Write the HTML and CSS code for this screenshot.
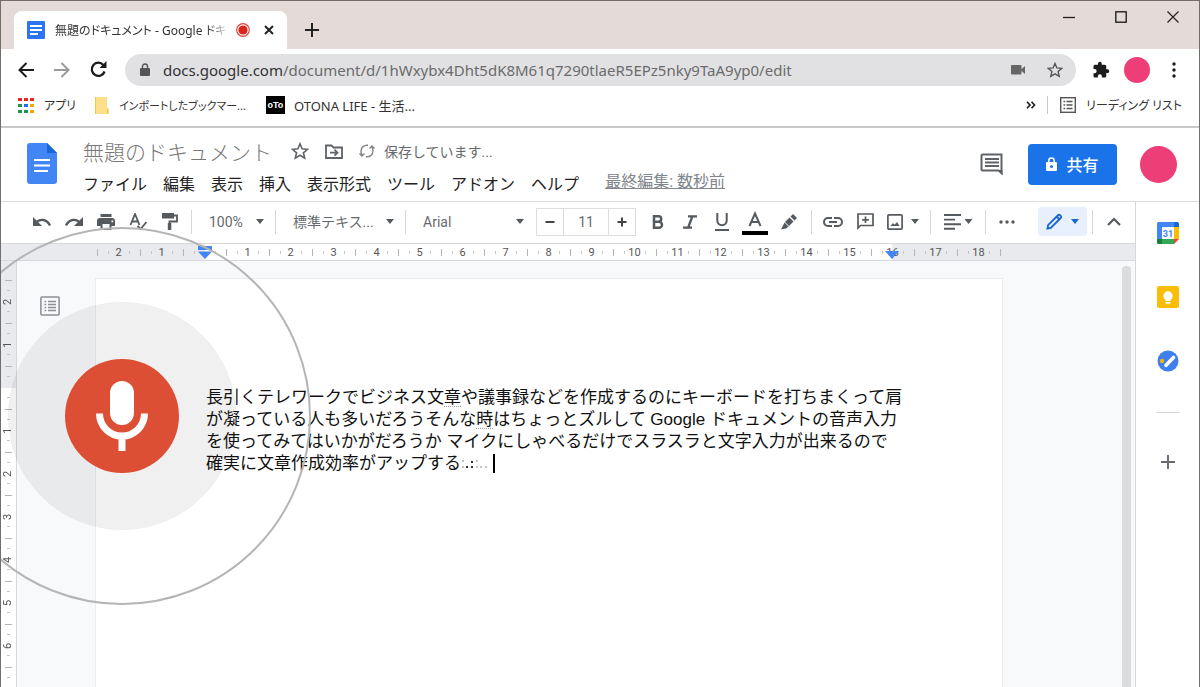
FILE: index.html
```html
<!DOCTYPE html>
<html lang="ja">
<head>
<meta charset="utf-8">
<title>無題のドキュメント - Google ドキュメント</title>
<link rel="stylesheet" href="styles.css">
</head>
<body>
<div class="window">
  <div class="tabstrip">
    <div class="tab">
      <svg class="favicon" width="18" height="18" viewBox="0 0 18 18"><rect width="18" height="18" rx="1" fill="#2e74f0"/><path d="M3 5h12M3 9h12M3 13h8" stroke="#fff" stroke-width="2"/></svg>
      <span class="tab-title">無題のドキュメント - Google ドキ</span>
      <svg width="14" height="14" viewBox="0 0 14 14"><circle cx="7" cy="7" r="6.3" fill="none" stroke="#e0443c" stroke-width="1.2"/><circle cx="7" cy="7" r="4.6" fill="#d9251c"/></svg>
      <button class="plain tab-close" aria-label="タブを閉じる"><svg width="10" height="10" viewBox="0 0 10 10"><path d="M1 1l8 8M9 1L1 9" stroke="#222" stroke-width="2"/></svg></button>
    </div>
    <button class="plain new-tab" aria-label="新しいタブ"><svg width="14" height="14" viewBox="0 0 14 14"><path d="M7 0v14M0 7h14" stroke="#222" stroke-width="2"/></svg></button>
    <div class="window-controls">
      <button class="plain" aria-label="最小化"><svg width="12" height="12" viewBox="0 0 12 12"><path d="M0 6.5h12" stroke="#222" stroke-width="1.3"/></svg></button>
      <button class="plain" aria-label="最大化"><svg width="12" height="12" viewBox="0 0 12 12"><rect x=".8" y=".8" width="10.4" height="10.4" fill="none" stroke="#222" stroke-width="1.4"/></svg></button>
      <button class="plain" aria-label="閉じる"><svg width="12" height="12" viewBox="0 0 12 12"><path d="M.5.5l11 11M11.5.5l-11 11" stroke="#222" stroke-width="1.2"/></svg></button>
    </div>
  </div>

  <div class="navbar">
    <button class="plain nav-btn" aria-label="戻る"><svg width="16" height="16" viewBox="0 0 16 16" fill="none" stroke="#1c1c1c" stroke-width="2"><path d="M16 8H2M8.500 1L1.500 8l7 7"/></svg></button>
    <button class="plain nav-btn" aria-label="進む"><svg width="16" height="16" viewBox="0 0 16 16" fill="none" stroke="#9a9a9a" stroke-width="2"><path d="M0 8h14M7.500 1l7 7-7 7"/></svg></button>
    <button class="plain nav-btn" aria-label="再読み込み"><svg width="17" height="17" viewBox="0 0 17 17"><path d="M14.600 10.500A6.600 6.600 0 1 1 13.300 3.900" fill="none" stroke="#1c1c1c" stroke-width="2.300"/><path d="M16.500 0v7h-7z" fill="#1c1c1c"/></svg></button>
    <div class="omnibox">
      <svg width="10" height="13" viewBox="0 0 10 13"><path d="M2.500 6V3.500a2.500 2.500 0 0 1 5 0V6" fill="none" stroke="#555" stroke-width="1.400"/><rect y="5" width="10" height="8" rx="1" fill="#555"/></svg>
      <label class="host" for="url">docs.google.com</label>
      <input id="url" class="url" type="text" value="/document/d/1hWxybx4Dht5dK8M61q7290tlaeR5EPz5nky9TaA9yp0/edit">
      <button class="plain" aria-label="カメラ"><svg width="14" height="10" viewBox="0 0 14 10" fill="#666"><rect width="10.500" height="9.500" rx="1"/><path d="M10 4.500L14 1v8l-4-3.500z"/></svg></button>
      <button class="plain omni-star" aria-label="ブックマーク"><svg width="16" height="16" viewBox="0 0 16 16"><path d="M8 1.400l1.900 4.500 4.900.4-3.700 3.200 1.100 4.800L8 11.800l-4.200 2.500 1.100-4.800L1.200 6.300l4.900-.4z" fill="none" stroke="#555" stroke-width="1.400"/></svg></button>
    </div>
    <button class="plain extensions" aria-label="拡張機能"><svg width="18" height="18" viewBox="0 0 24 24" fill="#1c1c1c"><path d="M20.500 11H19V7a2 2 0 0 0-2-2h-4V3.500a2.500 2.500 0 0 0-5 0V5H4a2 2 0 0 0-2 2v3.800h1.500a2.700 2.700 0 0 1 0 5.400H2V20a2 2 0 0 0 2 2h3.800v-1.500a2.700 2.700 0 0 1 5.400 0V22H17a2 2 0 0 0 2-2v-4h1.500a2.500 2.500 0 0 0 0-5z"/></svg></button>
    <button class="plain avatar avatar-small" aria-label="プロフィール"></button>
    <button class="plain browser-menu" aria-label="設定"><svg width="4" height="16" viewBox="0 0 4 16" fill="#1c1c1c"><circle cx="2" cy="2" r="1.700"/><circle cx="2" cy="8" r="1.700"/><circle cx="2" cy="14" r="1.700"/></svg></button>
  </div>

  <div class="bookmarks">
    <a class="bookmark" href="#"><svg width="16" height="15" viewBox="0 0 16 15"><g fill="#e8261c"><path d="M0 0h4v3H0zM6 0h4v3H6zM12 0h4v3h-4z"/></g><path d="M0 6h4v3H0zM0 12h4v3H0zM6 12h4v3H6z" fill="#1e9448"/><path d="M6 6h4v3H6z" fill="#1a73e8"/><path d="M12 6h4v3h-4zM12 12h4v3h-4z" fill="#f3a600"/></svg>アプリ</a>
    <a class="bookmark folder" href="#"><svg width="15" height="17" viewBox="0 0 15 17"><path d="M1 0h12v10l1.500 2V17H1z" fill="#ffe08a"/><path d="M13 11v6h1.500v-5zM1 0h1v17H1z" fill="#eec75a"/></svg>インポートしたブックマー...</a>
    <a class="bookmark oto" href="#"><span class="oto-logo">oTo</span>OTONA LIFE - 生活...</a>
    <button class="plain overflow" aria-label="その他のブックマーク"><svg width="10" height="8" viewBox="0 0 10 8" fill="none" stroke="#222" stroke-width="1.700"><path d="M1 .7L4 4 1 7.300M5.500.7l3 3.300-3 3.300"/></svg></button>
    <button class="plain bookmark reading"><svg width="16" height="16" viewBox="0 0 16 16"><rect x=".7" y=".7" width="14.600" height="14.600" fill="none" stroke="#555" stroke-width="1.400"/><path d="M3.500 4.500h1.700M3.500 8h1.700M3.500 11.500h1.700M6.500 4.500h6M6.500 8h6M6.500 11.500h6" stroke="#555" stroke-width="1.400"/></svg>リーディング リスト</button>
  </div>

  <header class="doc-header">
    <svg class="docs-logo" width="30" height="41" viewBox="0 0 30 41"><path d="M3 0h17l10 10v28a3 3 0 0 1-3 3H3a3 3 0 0 1-3-3V3a3 3 0 0 1 3-3z" fill="#4285f4"/><path d="M20 0l10 10H20z" fill="#1967d2"/><path d="M7 17h16M7 22.500h16M7 28h14" stroke="#fff" stroke-width="2.200"/></svg>
    <div class="doc-meta">
      <div class="title-row">
        <input class="doc-title" type="text" aria-label="ドキュメント名" value="無題のドキュメント">
        <button class="plain" aria-label="スター"><svg width="18" height="18" viewBox="0 0 18 18"><path d="M9 1.800l2.100 5 5.400.5-4.100 3.500 1.300 5.300L9 13.300l-4.700 2.800 1.300-5.300L1.500 7.300l5.400-.5z" fill="none" stroke="#5f6368" stroke-width="1.600"/></svg></button>
        <button class="plain" aria-label="移動"><svg width="18" height="15" viewBox="0 0 18 15" fill="none" stroke="#5f6368" stroke-width="1.800"><path d="M1 13V1.500h5.500l2 2H17V14H1zM5 8.700h7M9.500 5.700l3 3-3 3"/></svg></button>
        <span class="saving"><svg width="16" height="14" viewBox="0 0 16 14" fill="none" stroke="#80868b" stroke-width="1.400"><path d="M9 1.300C5 .8 2 3.500 2 7c0 1.500.3 2.700 1 3.800M.5 9.500L3 12l2.500-2.500M7 12.700c4 .5 7-2.200 7-5.700 0-1.500-.3-2.700-1-3.800M15.500 4.500L13 2l-2.500 2.500"/></svg>保存しています...</span>
      </div>
      <nav class="menu-row">
        <button class="plain">ファイル</button><button class="plain">編集</button><button class="plain">表示</button><button class="plain">挿入</button><button class="plain">表示形式</button><button class="plain">ツール</button><button class="plain">アドオン</button><button class="plain">ヘルプ</button>
        <a class="last-edit" href="#">最終編集: 数秒前</a>
      </nav>
    </div>
    <div class="header-actions">
      <button class="plain" aria-label="コメント履歴"><svg width="24" height="23" viewBox="0 0 24 23"><path d="M2.500 1.500h19V20l-3-2.500h-16a1 1 0 0 1-1-1v-14a1 1 0 0 1 1-1z" fill="none" stroke="#5f6368" stroke-width="2"/><path d="M18 17h4.500v5.500z" fill="#5f6368"/><path d="M5 6h14M5 9.500h14M5 13h14" stroke="#5f6368" stroke-width="1.800"/></svg></button>
      <button class="share"><svg width="11" height="14" viewBox="0 0 11 14"><path d="M2.800 6V3.700a2.700 2.700 0 0 1 5.400 0V6" fill="none" stroke="#fff" stroke-width="1.500"/><path fill-rule="evenodd" d="M1 5h9a1 1 0 0 1 1 1v7a1 1 0 0 1-1 1H1a1 1 0 0 1-1-1V6a1 1 0 0 1 1-1zm4.500 3a1.500 1.500 0 1 0 0 3 1.500 1.500 0 0 0 0-3z" fill="#fff"/></svg>共有</button>
      <button class="plain avatar avatar-large" aria-label="アカウント"></button>
    </div>
  </header>

  <div class="workspace">
    <div class="editor">
      <div class="toolbar">
        <button class="plain tool" aria-label="元に戻す"><svg width="20" height="12" viewBox="0 0 20 12"><path d="M3 7.500C8 2 15 3 18 9.500" fill="none" stroke="#555a5f" stroke-width="2.300"/><path d="M1 1v9h9z" fill="#555a5f"/></svg></button>
        <button class="plain tool" aria-label="やり直し"><svg width="20" height="12" viewBox="0 0 20 12"><path d="M17 7.500C12 2 5 3 2 9.500" fill="none" stroke="#555a5f" stroke-width="2.300"/><path d="M19 1v9h-9z" fill="#555a5f"/></svg></button>
        <button class="plain tool" aria-label="印刷"><svg width="18" height="16" viewBox="0 0 18 16"><path fill-rule="evenodd" d="M3.500 0h11v3h-11zM3 4h12a3 3 0 0 1 3 3v5h-3.500v4h-11v-4H0V7a3 3 0 0 1 3-3zm2.500 6v4h7v-4zm9-3.500v1.700h1.700V6.500z" fill="#555a5f"/></svg></button>
        <button class="plain tool" aria-label="スペルチェック"><svg width="18" height="17" viewBox="0 0 18 17" fill="none" stroke="#555a5f" stroke-width="1.800"><path d="M1.500 12L6 1l4.500 11M3 8.500h6M8.500 13l3 3L17.500 9"/></svg></button>
        <button class="plain tool" aria-label="書式を貼り付け"><svg width="16" height="17" viewBox="0 0 16 17"><path d="M0 0h12v5.500H0z" fill="#555a5f"/><path d="M12 2.500h3v6H7.500V11" fill="none" stroke="#555a5f" stroke-width="1.800"/><path d="M5.800 10h3.500v7H5.800z" fill="#555a5f"/></svg></button>
        <span class="sep"></span>
        <span class="picker picker-zoom"><select aria-label="ズーム"><option>100%</option></select></span>
        <span class="sep"></span>
        <span class="picker picker-style"><select aria-label="スタイル"><option>標準テキス...</option></select></span>
        <span class="sep"></span>
        <span class="picker picker-font"><select aria-label="フォント"><option>Arial</option></select></span>
        <div class="font-size">
          <button class="plain" aria-label="縮小"><svg width="12" height="12" viewBox="0 0 12 12"><path d="M1.500 6h9" stroke="#444" stroke-width="2"/></svg></button>
          <input type="text" aria-label="フォントサイズ" value="11">
          <button class="plain" aria-label="拡大"><svg width="12" height="12" viewBox="0 0 12 12"><path d="M1.500 6h9M6 1.500v9" stroke="#444" stroke-width="2"/></svg></button>
        </div>
        <button class="plain tool" aria-label="太字"><svg width="12" height="14" viewBox="0 0 12 14"><path d="M2 1.300h4.500a2.700 2.700 0 0 1 0 5.400H2zM2 6.700h5a3 3 0 0 1 0 6H2z" fill="none" stroke="#555a5f" stroke-width="2.500"/></svg></button>
        <button class="plain tool" aria-label="斜体"><svg width="14" height="14" viewBox="0 0 14 14"><path d="M5 1.300h9M0 12.700h9M9.500 1L5 13" fill="none" stroke="#555a5f" stroke-width="2.300"/></svg></button>
        <button class="plain tool" aria-label="下線"><svg width="14" height="18" viewBox="0 0 14 18"><path d="M2.300 0v7.500a4.700 4.700 0 0 0 9.400 0V0M0 17h14" fill="none" stroke="#555a5f" stroke-width="2"/></svg></button>
        <button class="plain tool tool-mid" aria-label="テキストの色"><svg width="26" height="26" viewBox="0 0 26 26"><path d="M7.500 17L13 4.500 18.500 17M9.500 13h7" fill="none" stroke="#555a5f" stroke-width="2"/><path d="M0 22h26v4H0z"/></svg></button>
        <button class="plain tool tool-mid" aria-label="ハイライト"><svg width="16" height="16" viewBox="0 0 16 16" fill="#555a5f"><path d="M9.500 2.500L12 0l4 4-2.500 2.500zM8.500 3.500l4 4L8 12 4 8zM3.500 8.500l4 4L5 14.500 0 15.500z"/></svg></button>
        <span class="sep"></span>
        <button class="plain tool" aria-label="リンク"><svg width="20" height="10" viewBox="0 0 20 10" fill="none" stroke="#555a5f" stroke-width="2"><path d="M9 1H5a4 4 0 0 0 0 8h4M11 1h4a4 4 0 0 1 0 8h-4M6 5h8"/></svg></button>
        <button class="plain tool" aria-label="コメントを追加"><svg width="17" height="17" viewBox="0 0 17 17" fill="none" stroke="#555a5f" stroke-width="1.700"><path d="M1 15V1h15v11.500H3.500zM8.500 3.500v6.500M5.200 6.800h6.600"/></svg></button>
        <button class="plain tool tool-drop" aria-label="画像を挿入"><svg width="16" height="16" viewBox="0 0 16 16"><rect x=".9" y=".9" width="14.200" height="14.200" rx="1" fill="none" stroke="#555a5f" stroke-width="1.700"/><path d="M3.500 12l2.500-3 1.500 1.800L10 8l2.500 4z" fill="#555a5f"/></svg><span class="caret"></span></button>
        <span class="sep"></span>
        <button class="plain tool tool-drop align" aria-label="配置"><svg width="17" height="16" viewBox="0 0 17 16"><path d="M0 1h17M0 5.600h11M0 10.200h17M0 14.800h11" stroke="#555a5f" stroke-width="1.900"/></svg><span class="caret"></span></button>
        <span class="sep"></span>
        <button class="plain tool" aria-label="その他"><svg width="16" height="4" viewBox="0 0 16 4" fill="#555a5f"><circle cx="2" cy="2" r="1.700"/><circle cx="8" cy="2" r="1.700"/><circle cx="14" cy="2" r="1.700"/></svg></button>
        <button class="plain mode" aria-label="編集モード"><svg width="17" height="17" viewBox="0 0 17 17"><path d="M1.500 15.500l.6-3.300L12 2.300a1.500 1.500 0 0 1 2 0l.7.7a1.500 1.500 0 0 1 0 2L4.800 14.900z" fill="none" stroke="#1967d2" stroke-width="1.900"/><path d="M10.500 3.500l3 3" stroke="#1967d2" stroke-width="2"/></svg><span class="caret caret-blue"></span></button>
        <span class="sep"></span>
        <button class="plain tool" aria-label="メニューを隠す"><svg width="14" height="9" viewBox="0 0 14 9"><path d="M1 8l6-6 6 6" fill="none" stroke="#555a5f" stroke-width="2.200"/></svg></button>
      </div>

      <div class="ruler">
        <span>2</span><span>1</span><span></span><span>1</span><span>2</span><span>3</span><span>4</span><span>5</span><span>6</span><span>7</span><span>8</span><span>9</span><span>10</span><span>11</span><span>12</span><span>13</span><span>14</span><span>15</span><span>16</span><span>17</span><span>18</span><span class="ruler-end"></span>
        <svg class="indent indent-left" width="14" height="13" viewBox="0 0 14 13" fill="#4285f4"><path d="M0 0h14v4H0zM0 5.500h14L7 13z"/></svg>
        <svg class="indent indent-right" width="14" height="13" viewBox="0 0 14 13" fill="#4285f4"><path d="M0 5h14l-7 8z"/></svg>
      </div>

      <div class="canvas">
        <div class="vruler">
          <span>2</span><span>1</span><span></span><span>1</span><span>2</span><span>3</span><span>4</span><span>5</span><span>6</span><span></span>
        </div>
        <div class="outline">
          <button class="plain" aria-label="ドキュメントの概要"><svg width="20" height="20" viewBox="0 0 20 20" stroke="#8b8f94" stroke-width="1.500"><rect x=".9" y=".9" width="18.200" height="18.200" rx="1" fill="none"/><path d="M4.500 5.500h1.700M4.500 8.500h1.700M4.500 11.500h1.700M4.500 14.500h1.700M8 5.500h8M8 8.500h8M8 11.500h8M8 14.500h8"/></svg></button>
        </div>
        <main class="page">
          <p class="text" contenteditable="true" spellcheck="false">長引くテレワークでビジネス文<span class="hint">章</span>や議事録などを作成するのにキーボードを打ちまくって肩<br>が凝っている人も多いだろうそんな<span class="hint">時</span>はちょっとズルして Google ドキュメントの音声入力<br>を使ってみてはいかがだろうか マイクにしゃべるだけでスラスラと文字入力が出来るので<br>確実に文章作成効率がアップする<svg class="dictating" width="28" height="10" viewBox="0 0 28 10"><g fill="#c4c4c4"><path d="M1 1h2v2H1zM1 7h2v2H1zM15 1h2v2h-2zM15 7h2v2h-2zM19 7h2v2h-2zM24 7h2v2h-2z"/></g><path d="M5 7h2v2H5zM10 2h2v2h-2zM10 7h2v2h-2z" fill="#333"/></svg><span class="cursor"></span></p>
        </main>
        <div class="scroll-track"><div class="scroll-thumb"></div></div>
      </div>
    </div>

    <aside class="side">
      <button class="plain" aria-label="カレンダー"><svg width="22" height="22" viewBox="0 0 22 22"><path d="M1.500 0H17v5H5v12H0V1.500A1.500 1.500 0 0 1 1.500 0z" fill="#4285f4"/><path d="M17 0h3.500A1.500 1.500 0 0 1 22 1.500V5h-5z" fill="#1967d2"/><path d="M17 5h5v12h-5z" fill="#fbbc04"/><path d="M5 17h12v5H5z" fill="#34a853"/><path d="M0 17h5v5H1.500A1.500 1.500 0 0 1 0 20.500z" fill="#188038"/><path d="M17 17h5l-5 5z" fill="#ea4335"/><path d="M5 5h12v12H5z" fill="#fff"/><text class="cal-day" x="11" y="14.500" text-anchor="middle">31</text></svg></button>
      <button class="plain" aria-label="Keep"><svg width="22" height="22" viewBox="0 0 22 22"><rect width="22" height="22" rx="2" fill="#fbbc04"/><circle cx="11" cy="10" r="4.700" fill="#fff"/><path d="M8.500 13h5v2h-5zM8.700 16h4.600v1.700H8.700z" fill="#fff"/></svg></button>
      <button class="plain" aria-label="ToDo リスト"><svg width="22" height="22" viewBox="0 0 22 22"><circle cx="11" cy="11" r="10.500" fill="#3f80ee"/><path d="M9 15.300L16.500 7.500" stroke="#fff" stroke-width="3.600" stroke-linecap="round"/><circle cx="5" cy="11" r="2.200" fill="#f5b400"/></svg></button>
      <hr>
      <button class="plain" aria-label="アドオンを取得"><svg width="14" height="14" viewBox="0 0 14 14"><path d="M7 0v14M0 7h14" stroke="#666a6e" stroke-width="1.900"/></svg></button>
    </aside>
  </div>

  <div class="voice">
    <div class="voice-level">
      <button class="plain voice-button" aria-label="音声入力を停止"><svg width="52" height="70" viewBox="0 0 52 70"><rect x="14" y="0" width="24" height="44" rx="12" fill="#fff"/><path d="M3.500 32.500a22.500 22.500 0 0 0 45 0M26 55v15" fill="none" stroke="#fff" stroke-width="7"/></svg></button>
    </div>
  </div>
</div>
</body>
</html>
```
FILE: styles.css
```css
* {
  box-sizing: border-box;
}

body {
  margin: 0;
  background: #fff;
  color: #333;
  font-family: "Noto Sans", "Noto Sans CJK JP", sans-serif;
  font-size: 13px;
}

svg {
  display: block;
  flex: none;
}

.plain {
  display: flex;
  align-items: center;
  justify-content: center;
  flex: none;
  margin: 0;
  padding: 0;
  border: 0;
  background: none;
  color: inherit;
  font: inherit;
  cursor: pointer;
}

input,
select {
  min-width: 0;
  margin: 0;
  padding: 0;
  border: 0;
  outline: 0;
  background: none;
  color: inherit;
  font: inherit;
}

.window {
  position: relative;
  display: flex;
  flex-direction: column;
  height: 100vh;
  overflow: hidden;
  border: 1px solid #756c6c;
  border-bottom: 0;
}

/* Browser chrome */

.tabstrip {
  display: flex;
  align-items: flex-end;
  flex: none;
  height: 48px;
  padding-left: 13px;
  background: #e4dad7;
}

.tab {
  display: flex;
  align-items: center;
  width: 273px;
  height: 38px;
  padding: 0 13px;
  border-radius: 8px 8px 0 0;
  background: #fff;
}

.tab-title {
  flex: 1;
  margin-left: 10px;
  font-size: 12px;
  font-feature-settings: "palt";
  white-space: nowrap;
  mask-image: linear-gradient(to right, #000 84%, transparent 97%);
}

.tab-close {
  margin-left: 14px;
}

.new-tab {
  height: 38px;
  margin-left: 18px;
}

.window-controls {
  display: flex;
  align-self: flex-start;
  gap: 40px;
  margin-left: auto;
  padding: 10px 20px 0 0;
}

.navbar {
  display: flex;
  align-items: center;
  flex: none;
  height: 41px;
  padding: 0 23px 0 7px;
}

.nav-btn {
  width: 36px;
}

.omnibox {
  display: flex;
  align-items: center;
  flex: 1;
  height: 32px;
  margin-left: 9px;
  padding: 0 13px 0 15px;
  border-radius: 16px;
  background: #e1e1e3;
  font-size: 15px;
}

.host {
  margin-left: 13px;
  color: #333;
}

.url {
  flex: 1;
  color: #6b6b6b;
}

.omni-star {
  margin-left: 22px;
}

.extensions {
  margin-left: 16px;
}

.avatar {
  border-radius: 50%;
  background: #ee3e78;
}

.avatar-small {
  width: 26px;
  height: 26px;
  margin: 0 22px 0 14px;
}

.bookmarks {
  display: flex;
  align-items: center;
  flex: none;
  height: 38px;
  padding: 0 17px 6px;
  border-bottom: 2px solid #c9c9c9;
  font-size: 12px;
  font-feature-settings: "palt";
}

.bookmark {
  display: flex;
  align-items: center;
  gap: 10px;
  color: #333;
  text-decoration: none;
  white-space: nowrap;
}

.folder {
  margin-left: 18px;
  font-size: 11px;
}

.oto {
  gap: 9px;
  margin-left: 20px;
  font-size: 13px;
}

.oto-logo {
  width: 19px;
  height: 18px;
  background: #000;
  color: #fff;
  font: bold 9px/18px "Liberation Sans", sans-serif;
  text-align: center;
}

.overflow {
  margin-left: auto;
}

.reading {
  margin-left: 11px;
  padding: 0 0 0 12px;
  border-left: 1px solid #c8c8c8;
}

/* Document header */

.doc-header {
  display: flex;
  flex: none;
  height: 74px;
  padding: 0 22px 0 26px;
  border-bottom: 1px solid #dcdde0;
}

.docs-logo {
  margin: 15px 26px 0 0;
}

.doc-meta {
  flex: 1;
  padding-top: 7px;
  font-family: Roboto, "Noto Sans CJK JP", sans-serif;
}

.title-row,
.menu-row {
  display: flex;
  align-items: center;
  height: 32px;
  white-space: nowrap;
}

.title-row {
  gap: 16px;
}

.doc-title {
  width: 192px;
  color: #777;
  font-size: 21px;
  font-weight: 300;
}

.saving {
  display: flex;
  align-items: center;
  gap: 9px;
  color: #666a6e;
  font-size: 14px;
}

.menu-row {
  gap: 16px;
  color: #222;
  font-size: 16px;
}

.last-edit {
  margin: 0 0 6px 10px;
  color: #80868b;
}

.header-actions {
  display: flex;
  align-items: center;
}

.share {
  display: flex;
  align-items: center;
  justify-content: center;
  gap: 9px;
  width: 89px;
  height: 41px;
  margin: 0 23px 0 24px;
  padding: 0 0 2px;
  border: 0;
  border-radius: 4px;
  background: #1a73e8;
  color: #fff;
  font: 500 16px "Noto Sans CJK JP", sans-serif;
}

.avatar-large {
  width: 37px;
  height: 37px;
}

/* Editor */

.workspace {
  display: flex;
  flex: 1;
  min-height: 0;
}

.editor {
  display: flex;
  flex: 1;
  flex-direction: column;
  min-width: 0;
}

.toolbar {
  display: flex;
  align-items: center;
  flex: none;
  height: 42px;
  padding: 0 5px 2px 25px;
  border-bottom: 1px solid #d6d8db;
  color: #666a6e;
  font-family: Roboto, "Noto Sans CJK JP", sans-serif;
  font-size: 14px;
}

.tool {
  width: 32px;
  height: 30px;
}

.tool-mid {
  width: 34px;
}

.tool-drop {
  width: 44px;
  gap: 8px;
}

.align {
  gap: 4px;
}

.sep {
  width: 1px;
  height: 24px;
  margin: 0 5px;
  background: #d6d8db;
}

.caret,
.picker::after {
  width: 8px;
  height: 5px;
  background: #555a5f;
  clip-path: polygon(0 0, 100% 0, 50% 100%);
  content: "";
}

.caret-blue {
  background: #1967d2;
}

.picker {
  display: flex;
  align-items: center;
  padding: 0 6px 0 12px;
}

.picker select {
  flex: 1;
  appearance: none;
}

.picker-zoom {
  width: 73px;
}

.picker-style {
  width: 119px;
}

.picker-font {
  width: 119px;
}

.font-size {
  display: flex;
  height: 28px;
  margin: 0 6px;
  border: 1px solid #dcdde0;
}

.font-size button {
  width: 26px;
}

.font-size input {
  width: 46px;
  border: solid #dcdde0;
  border-width: 0 1px;
  text-align: center;
}

.mode {
  gap: 8px;
  width: 49px;
  height: 29px;
  margin-left: auto;
  border-radius: 3px;
  background: #e8f0fe;
}

.ruler {
  position: relative;
  display: flex;
  flex: none;
  height: 17px;
  padding-left: 96px;
  border-bottom: 1px solid #d6d8db;
  background: linear-gradient(to right, #e8eaed 204px, #fff 204px, #fff 891px, #e8eaed 891px);
}

.ruler,
.vruler {
  color: #555;
  font: 11px/18px Roboto, sans-serif;
  text-align: center;
}

.ruler span {
  flex: 0 0 43px;
  height: 16px;
  background:
    linear-gradient(#b4b4b4, #b4b4b4) 0 50% / 1px 7px,
    linear-gradient(#c6c6c6, #c6c6c6) 11px 50% / 1px 3px,
    linear-gradient(#c6c6c6, #c6c6c6) 32px 50% / 1px 3px;
  background-repeat: no-repeat;
}

.ruler .ruler-end {
  flex-basis: 1px;
}

.indent {
  position: absolute;
  top: 2px;
}

.indent-left {
  left: 197px;
}

.indent-right {
  left: 884px;
}

.canvas {
  display: flex;
  flex: 1;
  min-height: 0;
  background: #f8f9fb;
}

.vruler {
  flex: none;
  width: 16px;
  padding-top: 19px;
  border-right: 1px solid #d6d8db;
  background: linear-gradient(#e8eaed 127px, #fff 127px);
}

.vruler span {
  display: block;
  width: 16px;
  height: 43px;
  line-height: 14px;
  writing-mode: vertical-rl;
  transform: rotate(180deg);
  background:
    linear-gradient(#b4b4b4, #b4b4b4) 50% 100% / 7px 1px,
    linear-gradient(#c6c6c6, #c6c6c6) 50% 11px / 3px 1px,
    linear-gradient(#c6c6c6, #c6c6c6) 50% 32px / 3px 1px;
  background-repeat: no-repeat;
}

.outline {
  flex: none;
  width: 79px;
  padding: 35px 0 0 23px;
}

.page {
  flex: 1;
  max-width: 906px;
  margin-top: 18px;
  padding: 108px 90px 0 110px;
  background: #fff;
  box-shadow: 0 0 0 1px #ececee;
}

.text {
  margin: 0;
  outline: 0;
  color: #111;
  font: 17px/22px "Liberation Sans", "Noto Sans CJK JP", sans-serif;
  white-space: nowrap;
}

.hint {
  background: linear-gradient(to right, #999 50%, transparent 50%) 0 100% / 2px 1px repeat-x;
}

.dictating {
  display: inline-block;
}

.cursor {
  display: inline-block;
  width: 2px;
  height: 19px;
  margin-left: 4px;
  background: #000;
  vertical-align: -4px;
}

.scroll-track {
  margin-left: auto;
  padding: 5px 4px 0 0;
}

.scroll-thumb {
  width: 9px;
  height: 100%;
  border-radius: 4px 4px 0 0;
  background: #dadcde;
}

.side {
  display: flex;
  flex: none;
  flex-direction: column;
  align-items: center;
  gap: 42px;
  width: 64px;
  padding-top: 20px;
  border-left: 1px solid #d6d8db;
}

.side hr {
  width: 24px;
  height: 1px;
  margin: -2px 0 0;
  border: 0;
  background: #d6d8db;
}

.cal-day {
  fill: #4285f4;
  font: bold 9px Roboto, sans-serif;
}

/* Voice typing overlay */

.voice {
  position: absolute;
  top: 226px;
  left: -68px;
  display: flex;
  align-items: center;
  justify-content: center;
  width: 378px;
  height: 378px;
  border: 2px solid #b5b5b5;
  border-radius: 50%;
  pointer-events: none;
}

.voice-level {
  display: flex;
  align-items: center;
  justify-content: center;
  width: 228px;
  height: 228px;
  border: 1px solid rgba(0, 0, 0, 0.08);
  border-radius: 50%;
  background: rgba(0, 0, 0, 0.06);
  background-clip: padding-box;
}

.voice-button {
  width: 114px;
  height: 114px;
  border-radius: 50%;
  background: #dd4f34;
  pointer-events: auto;
}
```
